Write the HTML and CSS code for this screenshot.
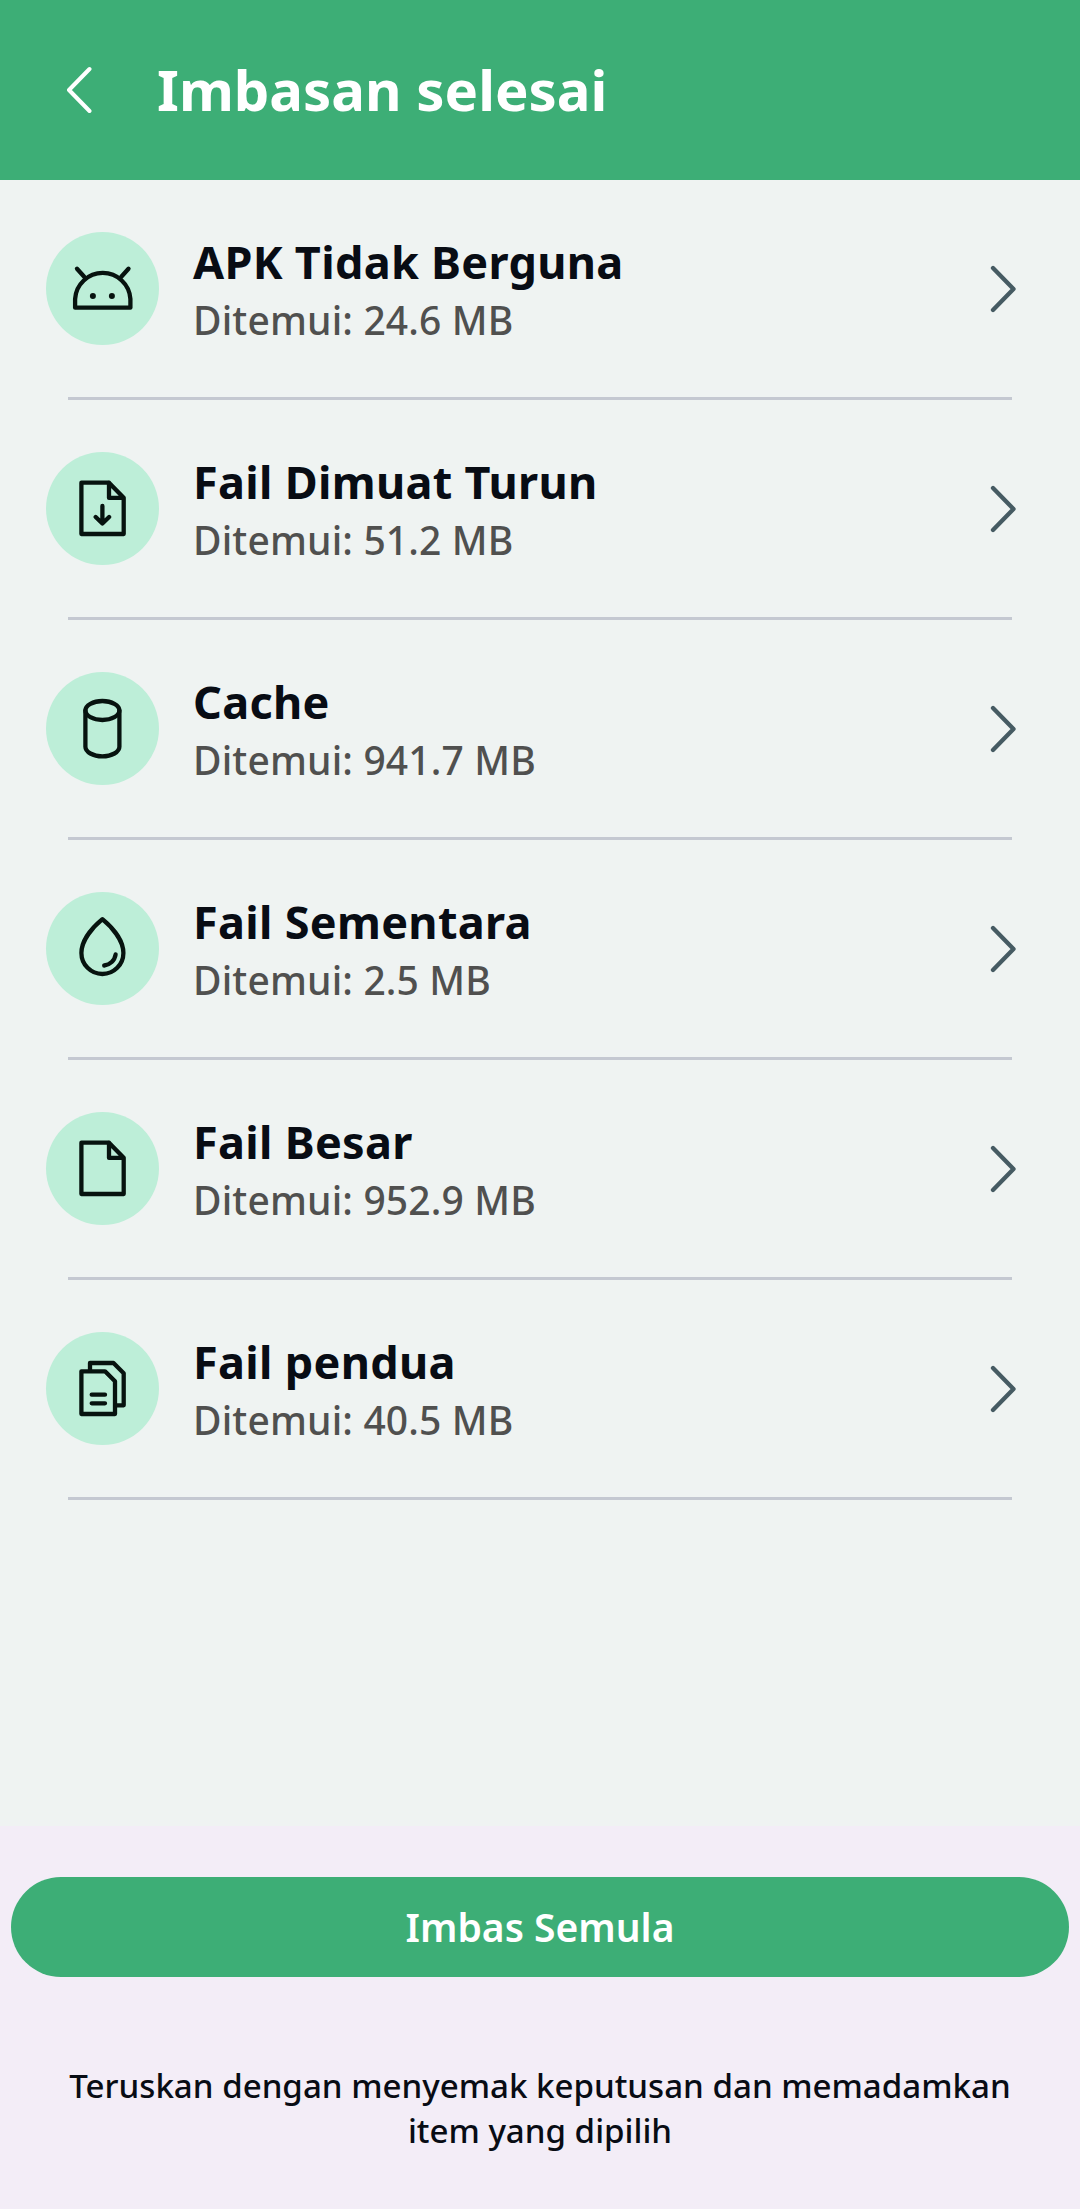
FILE: index.html
```html
<!DOCTYPE html>
<html lang="ms">
<head>
  <meta charset="utf-8">
  <meta name="viewport" content="width=device-width, initial-scale=1"/>
  <title>Imbasan selesai</title>
  <link rel="stylesheet" href="styles.css">
</head>
<body>
  <header class="top-bar">
    <svg class="back" viewBox="0 0 26 48"><path d="M23.5 3L3 24l20.500 21"/></svg>
    <h1>Imbasan selesai</h1>
  </header>
  <main>
    <ul class="results">
      <li class="row">
        <svg class="icon" viewBox="0 0 113 113">
          <path d="M29.100 75.700V67a27.700 27.700 0 0 1 55.300 0v8.700zM31 36.700l7.200 8M82.500 36.700l-7.200 8"/>
          <circle class="dot" cx="46.900" cy="64" r="3"/>
          <circle class="dot" cx="65.900" cy="64" r="3"/>
        </svg>
        <div class="text">
          <h2>APK Tidak Berguna</h2>
          <p>Ditemui: 24.6 MB</p>
        </div>
        <svg class="arrow" viewBox="0 0 26 48"><path d="M3 3l20.500 21L3 45"/></svg>
      </li>
      <li class="row">
        <svg class="icon" viewBox="0 0 113 113">
          <path d="M63 30.700H35.400V82h42.300V45.800L63 30.700v15.200h14.700"/>
          <path d="M56.400 54v17.500M49.700 65l6.700 6.500 6.700-6.500"/>
        </svg>
        <div class="text">
          <h2>Fail Dimuat Turun</h2>
          <p>Ditemui: 51.2 MB</p>
        </div>
        <svg class="arrow" viewBox="0 0 26 48"><path d="M3 3l20.500 21L3 45"/></svg>
      </li>
      <li class="row">
        <svg class="icon" viewBox="0 0 113 113">
          <ellipse cx="56.400" cy="38.500" rx="17" ry="9.500"/>
          <path d="M39.400 38.500v36.300c0 5.200 7.600 9.500 17 9.500s17-4.300 17-9.500V38.500"/>
        </svg>
        <div class="text">
          <h2>Cache</h2>
          <p>Ditemui: 941.7 MB</p>
        </div>
        <svg class="arrow" viewBox="0 0 26 48"><path d="M3 3l20.500 21L3 45"/></svg>
      </li>
      <li class="row">
        <svg class="icon" viewBox="0 0 113 113">
          <path d="M56.400 27.200C47 35 35.400 48 35.400 61a21 21 0 0 0 42 0c0-13-11.600-26-21-33.800z"/>
          <path d="M58.200 73.500c5.800-.6 10.500-5 11.400-11"/>
        </svg>
        <div class="text">
          <h2>Fail Sementara</h2>
          <p>Ditemui: 2.5 MB</p>
        </div>
        <svg class="arrow" viewBox="0 0 26 48"><path d="M3 3l20.500 21L3 45"/></svg>
      </li>
      <li class="row">
        <svg class="icon" viewBox="0 0 113 113">
          <path d="M63 30.700H35.400V82h42.300V45.800L63 30.700v15.200h14.700"/>
        </svg>
        <div class="text">
          <h2>Fail Besar</h2>
          <p>Ditemui: 952.9 MB</p>
        </div>
        <svg class="arrow" viewBox="0 0 26 48"><path d="M3 3l20.500 21L3 45"/></svg>
      </li>
      <li class="row">
        <svg class="icon" viewBox="0 0 113 113">
          <path d="M35.400 39.300H59l10 10V82H35.400z"/>
          <path d="M44 38.500V31h23.500l10.200 10.200v32.100H70M45.700 62.700H59M45.700 71.300H59"/>
        </svg>
        <div class="text">
          <h2>Fail pendua</h2>
          <p>Ditemui: 40.5 MB</p>
        </div>
        <svg class="arrow" viewBox="0 0 26 48"><path d="M3 3l20.500 21L3 45"/></svg>
      </li>
    </ul>
  </main>
  <footer>
    <button class="btn">Imbas Semula</button>
    <p class="hint">Teruskan dengan menyemak keputusan dan memadamkan item yang dipilih</p>
  </footer>
</body>
</html>
```
FILE: styles.css
```css
* {
  box-sizing: border-box;
}
html,
body {
  margin: 0;
  padding: 0;
}
body {
  display: flex;
  flex-direction: column;
  height: 2209px;
  font-family: "Noto Sans", sans-serif;
  color: #080c14;
  background-color: #eff3f2;
}
h1, h2, p, ul {
  margin: 0;
  padding: 0;
}
svg {
  display: block;
  flex: none;
  fill: none;
  stroke-linecap: round;
  stroke-linejoin: round;
}

.top-bar {
  display: flex;
  align-items: center;
  height: 180px;
  padding: 0 66px;
  color: #fff;
  background-color: #3dae76;
}
.top-bar h1 {
  margin-left: 65px;
  padding-bottom: 2px;
  font-size: 56.300px;
  font-weight: 700;
  line-height: 76px;
}
.back {
  width: 26px;
  height: 48px;
  stroke: #fff;
  stroke-width: 4;
}

main {
  flex: 1;
}
.results {
  list-style: none;
}
.row {
  display: flex;
  align-items: center;
  height: 220px;
  padding: 0 64px 3px 46px;
  /* divider is inset from both sides */
  background: linear-gradient(#c4c8d1, #c4c8d1) 68px 100% / 944px 3px no-repeat;
}
.icon {
  width: 113px;
  height: 113px;
  border-radius: 50%;
  background-color: #bdeed8;
  stroke: #07130f;
  stroke-width: 4.300;
}
.icon .dot {
  fill: #07130f;
  stroke: none;
}
.text {
  flex: 1;
  margin-left: 34px;
  padding-top: 2px;
}
.text h2 {
  font-size: 45px;
  font-weight: 700;
  line-height: 60px;
  letter-spacing: .3px;
}
.text p {
  padding-top: 1px;
  font-size: 39px;
  font-weight: 500;
  line-height: 54px;
  letter-spacing: .15px;
  color: #50504f;
}
.arrow {
  width: 26px;
  height: 48px;
  stroke: #465b63;
  stroke-width: 4.300;
}

footer {
  height: 383px;
  padding: 51px 11px 0;
  text-align: center;
  background-color: #f3edf7;
}
.btn {
  display: block;
  width: 100%;
  height: 100px;
  padding: 0 0 2px;
  border: 0;
  border-radius: 50px;
  font-family: inherit;
  font-size: 39px;
  font-weight: 600;
  color: #fff;
  background-color: #3dae76;
}
.hint {
  padding: 86px 40px 0;
  font-size: 33.100px;
  font-weight: 500;
  line-height: 45px;
}
```
